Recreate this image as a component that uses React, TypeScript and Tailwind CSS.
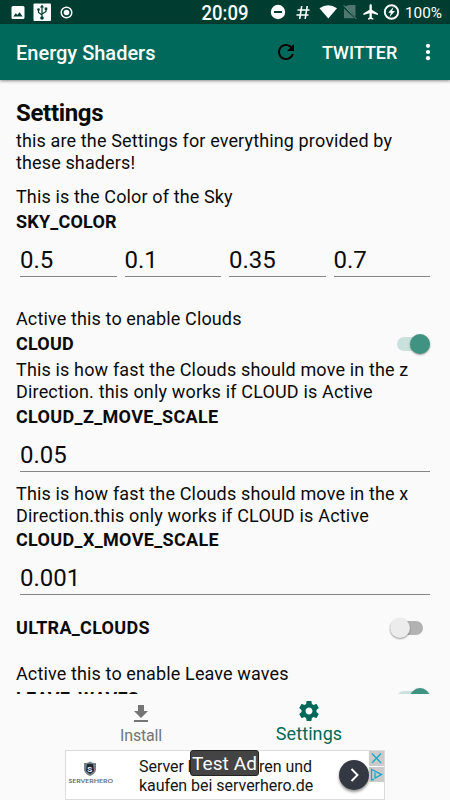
import React from "react";

function StatusBar() {
  return (
    <div className="flex h-6 shrink-0 bg-[#003d31] text-white">
      <svg width="450" height="24" viewBox="0 0 450 24" fill="#fff">
        <path fillRule="evenodd" d="M13 6h10a1.500 1.500 0 0 1 1.500 1.500v10a1.500 1.500 0 0 1-1.500 1.500h-10a1.500 1.500 0 0 1-1.500-1.500v-10a1.500 1.500 0 0 1 1.500-1.500zM13.300 16.500h9.400l-3.200-4.200-2.200 2.700-1.500-1.700z" />
        <rect x="33.500" y="3.500" width="17.500" height="17.500" rx="1" />
        <g stroke="#003d31" strokeWidth="1.200" fill="none">
          <path d="M42 6v11M38.500 9.500v3l3.500 2.500M46 8.500v3L42 14" />
        </g>
        <g fill="#003d31">
          <path d="M42 4.500l2 3h-4z" />
          <circle cx="42" cy="18" r="1.800" />
          <circle cx="38.500" cy="9.500" r="1.300" />
          <rect x="44.700" y="7.500" width="2.600" height="2.600" />
        </g>
        <circle cx="66.500" cy="12.500" r="5.300" fill="none" stroke="#fff" strokeWidth="1.500" />
        <circle cx="66.500" cy="12.500" r="2.800" />
        <text x="201.500" y="19.700" fontFamily="Roboto, sans-serif" fontSize="20" fontWeight="500" textLength="47" lengthAdjust="spacingAndGlyphs">20:09</text>
        <circle cx="278" cy="12" r="7.200" />
        <rect x="274" y="11" width="8" height="2" fill="#003d31" />
        <path d="M301.700 6l-2 13M307.200 6l-2 13M297.500 10h12M296.500 15h12" stroke="#fff" strokeWidth="1.600" fill="none" />
        <path d="M319.500 8.300Q328 2 337 8.300L328.300 18.500z" />
        <path d="M348.500 5h7v11.500L345 6.800zM344 8.500v9.700h10.500z" opacity=".3" />
        <path d="M343.500 5l13 14" stroke="#fff" strokeWidth="1" opacity=".4" />
        <path transform="translate(361.800 2.800) scale(.77)" d="M21 16v-2l-8-5V3.500c0-.83-.67-1.500-1.500-1.500S10 2.670 10 3.500V9l-8 5v2l8-2.500V19l-2 1.500V22l3.500-1 3.500 1v-1.500L13 19v-5.500l8 2.500z" />
        <circle cx="391.500" cy="12" r="6.700" fill="none" stroke="#fff" strokeWidth="1.900" />
        <path d="M393.500 7l-5.300 5.800h2.700L389.500 17l5.500-6h-2.800z" />
        <text x="405" y="17.700" fontFamily="Roboto, sans-serif" fontSize="15" textLength="37" lengthAdjust="spacingAndGlyphs">100%</text>
      </svg>
    </div>
  );
}

function AppBar() {
  return (
    <header className="z-10 flex h-14 shrink-0 items-center bg-[#00695b] pl-4 text-white shadow-[0_1px_3px_rgba(0,0,0,0.45)]">
      <h1 className="mt-px text-[20px] font-medium">Energy Shaders</h1>
      <svg className="ml-auto" width="24" height="24" viewBox="0 0 24 24" fill="#000">
        <path d="M17.650 6.350C16.200 4.900 14.210 4 12 4c-4.420 0-7.990 3.580-7.990 8s3.570 8 7.990 8c3.730 0 6.840-2.550 7.730-6h-2.080c-.82 2.330-3.040 4-5.650 4-3.310 0-6-2.690-6-6s2.690-6 6-6c1.660 0 3.140.69 4.220 1.780L13 11h7V4l-2.350 2.350z" />
      </svg>
      <span className="ml-6 mt-px w-[77px] whitespace-nowrap text-[18px] font-medium">TWITTER</span>
      <svg className="ml-[17px] mr-[10px]" width="24" height="24" viewBox="0 0 24 24" fill="#fff">
        <circle cx="12" cy="5.800" r="2.100" />
        <circle cx="12" cy="12" r="2.100" />
        <circle cx="12" cy="18.200" r="2.100" />
      </svg>
    </header>
  );
}

function Desc({ children, className }: { children: React.ReactNode; className: string }) {
  return <p className={`whitespace-nowrap text-[18px] leading-[21.500px] ${className}`}>{children}</p>;
}

function Key({ children, className = "" }: { children: React.ReactNode; className?: string }) {
  return <h3 className={`text-[18px] font-bold leading-[21px] ${className}`}>{children}</h3>;
}

function Field({ value, className = "" }: { value: string; className?: string }) {
  return (
    <div className={`ml-1 h-[31px] border-b border-[#858585] text-[24px] leading-[28px] ${className}`}>{value}</div>
  );
}

function Toggle({ on }: { on: boolean }) {
  return on ? (
    <div className="flex h-[14px] w-[33px] items-center justify-end rounded-full bg-[#c9e1dc]">
      <div className="size-5 shrink-0 rounded-full bg-[#409381] shadow-[0_1px_2px_rgba(0,0,0,0.4)]" />
    </div>
  ) : (
    <div className="mr-[7px] flex h-[14px] w-[33px] items-center rounded-full bg-[#b2b2b2]">
      <div className="size-5 shrink-0 rounded-full bg-[#ececec] shadow-[0_1px_2px_rgba(0,0,0,0.4)]" />
    </div>
  );
}

function AdBanner() {
  return (
    <div className="relative ml-[65px] flex h-[50px] w-[320px] border border-[#dcdcdc] bg-white">
      <svg className="shrink-0" width="60" height="48" viewBox="66 751 60 48">
        <path d="M90 761.500q3 2 6 1.500v7q-1 4-6 6-5-2-6-6v-7q3 .5 6-1.500z" fill="#75808a" />
        <path d="M87 764h6l1 7-4 3-4-3z" fill="#202a35" />
        <text x="87.300" y="772" fontFamily="Roboto, sans-serif" fontSize="8" fontWeight="700" fill="#eef1f3">S</text>
        <text x="68.500" y="782.800" fontFamily="Lato, sans-serif" fontSize="6.300" fontWeight="700" fill="#68717b" textLength="44.500" lengthAdjust="spacingAndGlyphs">SERVERHERO</text>
      </svg>
      <div className="ml-[13px] mt-[6px] w-[178px] shrink-0 whitespace-nowrap text-[16px] leading-[19px] tracking-[-0.030px] text-[#151515]">
        <p className="flex w-[173px] justify-between">
          <span>Server k</span>
          <span>ren und</span>
        </p>
        <p>kaufen bei serverhero.de</p>
      </div>
      <div className="absolute left-[124px] top-[-1px] flex h-[26px] w-[69px] items-center justify-center whitespace-nowrap rounded-[3px] border border-[#222] bg-[#444] text-[19px] tracking-[0.100px] text-white">
        <span className="mt-[2px]">Test Ad</span>
      </div>
      <div className="ml-[22px] mt-[9px] flex size-[30px] items-center justify-center rounded-full bg-[#343842] shadow-[0_2px_3px_rgba(0,0,0,0.45)]">
        <svg width="30" height="30" viewBox="0 0 30 30" fill="none" stroke="#fff" strokeWidth="1.900">
          <path d="M12.500 9l6 6-6 6" />
        </svg>
      </div>
      <div className="ml-auto flex flex-col gap-px">
        <svg width="15" height="15" viewBox="0 0 15 15" className="bg-[#cbcbcb]" fill="none" stroke="#16a9c9" strokeWidth="1.300">
          <path d="M3 2.500l9 9.500M12 2.500L3 12" />
        </svg>
        <svg width="15" height="15" viewBox="0 0 15 15" className="bg-[#cbcbcb]" fill="none" stroke="#16a9c9" strokeWidth="1.300">
          <path d="M5 12.500L2.500 13V2.300l10 5.300-6.500 3.500V5.500" />
        </svg>
      </div>
    </div>
  );
}

function BottomNav() {
  return (
    <nav className="flex h-[56px] shrink-0 bg-[#fafafa] pl-[57px]">
      <div className="flex w-[168px] flex-col items-center pt-[8px] text-[#757575]">
        <svg width="24" height="24" viewBox="0 0 24 24" fill="currentColor">
          <path d="M19 9h-4V3H9v6H5l7 7 7-7zM5 18v2h14v-2H5z" />
        </svg>
        <span className="text-[16px] leading-[19px] tracking-[-0.200px]">Install</span>
      </div>
      <div className="flex w-[168px] flex-col items-center pt-[5px] text-[#006858]">
        <svg width="24" height="24" viewBox="0 0 24 24" fill="currentColor">
          <path d="M19.430 12.980c.04-.32.07-.64.07-.98s-.03-.66-.07-.98l2.110-1.650c.19-.15.24-.42.12-.64l-2-3.460c-.12-.22-.39-.3-.61-.22l-2.490 1c-.52-.4-1.080-.73-1.690-.98l-.38-2.650C14.460 2.180 14.250 2 14 2h-4c-.25 0-.46.18-.49.42l-.38 2.650c-.61.25-1.170.59-1.690.98l-2.490-1c-.23-.09-.49 0-.61.22l-2 3.460c-.13.22-.07.49.12.64l2.110 1.650c-.04.32-.07.65-.07.98s.03.66.07.98l-2.110 1.650c-.19.15-.24.42-.12.64l2 3.460c.12.22.39.3.61.22l2.490-1c.52.4 1.080.73 1.690.98l.38 2.650c.03.24.24.42.49.42h4c.25 0 .46-.18.49-.42l.38-2.650c.61-.25 1.170-.59 1.690-.98l2.490 1c.23.09.49 0 .61-.22l2-3.460c.12-.22.07-.49-.12-.64l-2.110-1.650zM12 15.500c-1.930 0-3.500-1.570-3.500-3.500s1.570-3.500 3.500-3.500 3.500 1.570 3.500 3.500-1.570 3.500-3.500 3.500z" />
        </svg>
        <span className="text-[18px] leading-[21px] tracking-[0.100px]">Settings</span>
      </div>
    </nav>
  );
}

export default function App() {
  return (
    <div className="flex h-[800px] w-[450px] flex-col overflow-hidden bg-[#fafafa] font-['Roboto',sans-serif] text-[#0b0b0b]">
      <StatusBar />
      <AppBar />
      <main className="min-h-0 flex-1 overflow-hidden pl-4 pr-5 pt-[19px]">
        <h2 className="text-[24px] font-bold leading-[28px] tracking-[-0.320px]">Settings</h2>
        <Desc className="mt-[3px] tracking-[0.130px]">
          this are the Settings for everything provided by
          <br />
          these shaders!
        </Desc>
        <Desc className="mt-[13px] tracking-[0.130px]">This is the Color of the Sky</Desc>
        <Key className="mt-[3px] tracking-[0.200px]">SKY_COLOR</Key>
        <div className="mt-[14px] grid grid-cols-4 gap-x-1">
          <Field value="0.5" />
          <Field value="0.1" />
          <Field value="0.35" />
          <Field value="0.7" />
        </div>
        <Desc className="mt-[31px] tracking-[0.130px]">Active this to enable Clouds</Desc>
        <div className="mt-[4px] flex h-[21px] items-center justify-between">
          <Key className="tracking-[0.200px]">CLOUD</Key>
          <Toggle on />
        </div>
        <Desc className="mt-[5px] tracking-[0.150px]">
          This is how fast the Clouds should move in the z
          <br />
          <span className="tracking-[0.170px]">Direction. this only works if CLOUD is Active</span>
        </Desc>
        <Key className="mt-[4px] tracking-[0.330px]">CLOUD_Z_MOVE_SCALE</Key>
        <Field value="0.05" className="mt-[14px]" />
        <Desc className="mt-[11px] tracking-[0.150px]">
          This is how fast the Clouds should move in the x
          <br />
          <span className="tracking-[0.190px]">Direction.this only works if CLOUD is Active</span>
        </Desc>
        <Key className="mt-[3px] tracking-[0.330px]">CLOUD_X_MOVE_SCALE</Key>
        <Field value="0.001" className="mt-[14px]" />
        <div className="mt-[22px] flex h-[21px] items-center justify-between">
          <Key className="tracking-[0.280px]">ULTRA_CLOUDS</Key>
          <Toggle on={false} />
        </div>
        <Desc className="mt-[25px] tracking-[0.130px]">Active this to enable Leave waves</Desc>
        <div className="mt-[3px] flex h-[21px] items-center justify-between">
          <Key className="tracking-[0.200px]">LEAVE_WAVES</Key>
          <Toggle on />
        </div>
      </main>
      <BottomNav />
      <AdBanner />
    </div>
  );
}
